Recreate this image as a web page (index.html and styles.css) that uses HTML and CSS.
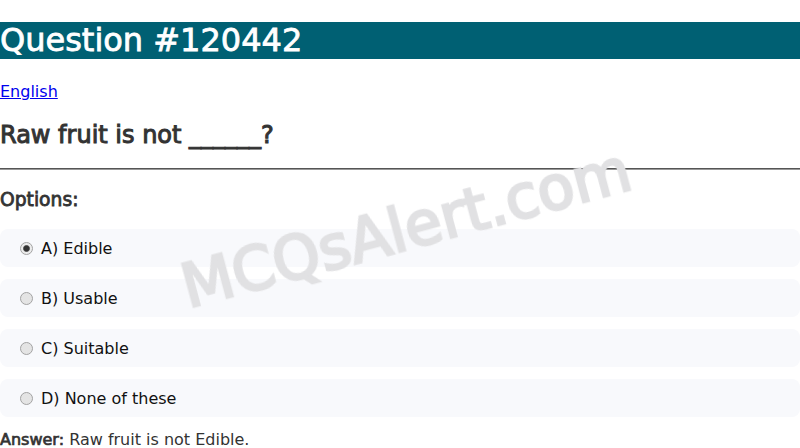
FILE: index.html
```html
<!DOCTYPE html>
<html lang="en">
<head>
<meta charset="utf-8">
<title>Question #120442</title>
<link rel="stylesheet" href="styles.css">
</head>
<body>
<h1 class="title">Question #120442</h1>
<p class="lang"><a href="#">English</a></p>
<h2 class="question">Raw fruit is not ______?</h2>
<hr class="divider">
<h3 class="options-title">Options:</h3>
<div class="options">
  <label class="option"><input class="radio" type="radio" name="q" disabled checked><span>A) Edible</span></label>
  <label class="option"><input class="radio" type="radio" name="q" disabled><span>B) Usable</span></label>
  <label class="option"><input class="radio" type="radio" name="q" disabled><span>C) Suitable</span></label>
  <label class="option"><input class="radio" type="radio" name="q" disabled><span>D) None of these</span></label>
</div>
<p class="answer"><strong class="answer-label">Answer:</strong> Raw fruit is not Edible.</p>
<div class="watermark">MCQsAlert.com</div>
</body>
</html>
```
FILE: styles.css
```css
html, body {
  margin: 0;
  padding: 0;
  background: #fff;
}
body {
  font-family: "DejaVu Sans", sans-serif;
  font-size: 16px;
  color: #333;
  overflow: hidden;
}
.title {
  margin: 22px 0 23px;
  background: #006073;
  color: #fff;
  font-size: 32px;
  font-weight: normal;
  line-height: 37px;
  -webkit-text-stroke: 0.8px #fff;
}
.lang {
  margin: 0 0 16px;
  line-height: 19px;
}
.lang a {
  color: #0000ee;
}
.question {
  margin: 20px 0 19px;
  font-size: 24px;
  font-weight: normal;
  line-height: 28px;
  color: #333;
  -webkit-text-stroke: 1px #333;
}
.divider {
  margin: 0;
  border: 0;
  border-top: 1px solid #555;
  border-bottom: 1px solid #999;
  height: 0;
}
.options-title {
  margin: 19px 0 18px;
  font-size: 18.72px;
  font-weight: normal;
  line-height: 22px;
  color: #333;
  -webkit-text-stroke: 0.8px #333;
}
.options {
  display: flex;
  flex-direction: column;
  gap: 12px;
}
.option {
  display: flex;
  align-items: center;
  height: 38px;
  box-sizing: border-box;
  padding-left: 15px;
  background: #f8f9fc;
  border-radius: 8px;
  color: #111;
  font-size: 16px;
}
.radio {
  -webkit-appearance: none;
  appearance: none;
  margin: 0 8px 0 5px;
  width: 13px;
  height: 13px;
  box-sizing: border-box;
  border-radius: 50%;
  border: 1px solid #a3a3a3;
  background: #e4e4e4;
}
.radio:checked {
  background: radial-gradient(circle, #333 0 2.6px, #777 3.2px, #ececec 3.8px);
}
.answer {
  margin: 13px 0 0;
  line-height: 19px;
  color: #333;
}
.answer-label {
  font-weight: normal;
  -webkit-text-stroke: 0.7px #333;
}
.watermark {
  position: fixed;
  left: 50.7%;
  top: 51%;
  transform: translate(-50%, -50%) rotate(-15deg);
  font-size: 60px;
  font-weight: normal;
  color: #e1e1e3;
  -webkit-text-stroke: 2.6px #e1e1e3;
  white-space: nowrap;
  pointer-events: none;
}
```
